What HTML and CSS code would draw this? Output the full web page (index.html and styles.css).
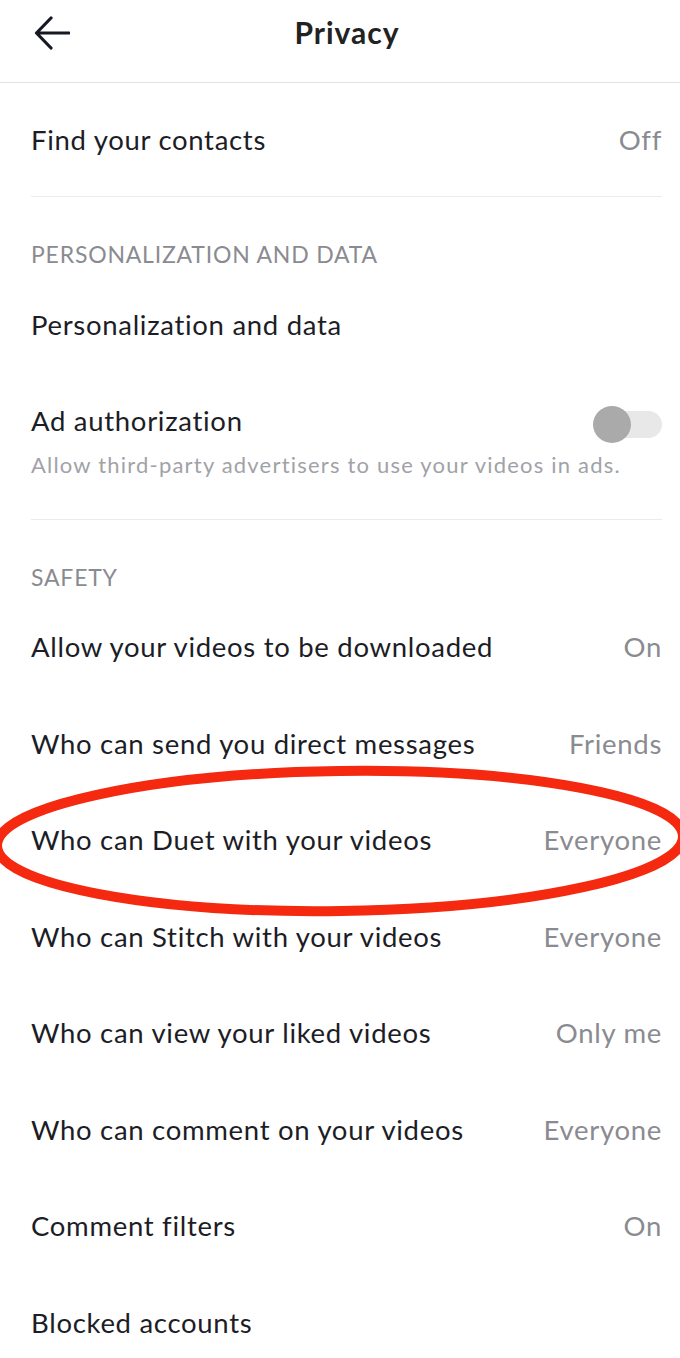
FILE: index.html
```html
<!DOCTYPE html>
<html lang="en">
<head>
    <meta charset="UTF-8">
    <meta name="viewport" content="width=device-width, initial-scale=1.0">
    <title>Privacy</title>
    <link rel="stylesheet" href="styles.css">
</head>
<body>
    <div class="screen">
        <header class="topbar">
            <svg class="back" width="36" height="36" viewBox="0 0 36 36">
                <path d="M35 18H3M17 3L2.5 18L17 33" fill="none" stroke="#161823" stroke-width="3.2" stroke-linecap="round" stroke-linejoin="round"/>
            </svg>
            <h1>Privacy</h1>
        </header>

        <div class="list">
            <div class="group first">
                <div class="row">
                    <span class="label">Find your contacts</span>
                    <span class="value">Off</span>
                </div>
            </div>

            <div class="group">
                <div class="section">PERSONALIZATION AND DATA</div>
                <div class="row">
                    <span class="label">Personalization and data</span>
                </div>
                <div class="row tall">
                    <div class="line">
                        <span class="label">Ad authorization</span>
                        <span class="toggle"><span class="knob"></span></span>
                    </div>
                    <div class="sub">Allow third-party advertisers to use your videos in ads.</div>
                </div>
            </div>

            <div class="group last">
                <div class="section">SAFETY</div>
                <div class="row">
                    <span class="label">Allow your videos to be downloaded</span>
                    <span class="value">On</span>
                </div>
                <div class="row">
                    <span class="label">Who can send you direct messages</span>
                    <span class="value">Friends</span>
                </div>
                <div class="row">
                    <span class="label">Who can Duet with your videos</span>
                    <span class="value">Everyone</span>
                </div>
                <div class="row">
                    <span class="label">Who can Stitch with your videos</span>
                    <span class="value">Everyone</span>
                </div>
                <div class="row">
                    <span class="label">Who can view your liked videos</span>
                    <span class="value">Only me</span>
                </div>
                <div class="row">
                    <span class="label">Who can comment on your videos</span>
                    <span class="value">Everyone</span>
                </div>
                <div class="row">
                    <span class="label">Comment filters</span>
                    <span class="value">On</span>
                </div>
                <div class="row">
                    <span class="label">Blocked accounts</span>
                </div>
            </div>
        </div>

        <!-- red circle drawn over the Duet row -->
        <svg class="mark" width="700" height="160" viewBox="0 0 700 160">
            <ellipse cx="350" cy="80" rx="343" ry="70" fill="none" stroke="#f4290f" stroke-width="10" transform="rotate(-0.8 350 80)"/>
        </svg>
    </div>
</body>
</html>
```

FILE: styles.css
```css
/* General Reset */
* {
    margin: 0;
    padding: 0;
    box-sizing: border-box;
}
body {
    font-family: Lato, 'Open Sans', sans-serif;
    background-color: #fff;
    color: #161823;
}
.screen {
    position: relative;
    width: 680px;
    height: 1358px;
    overflow: hidden;
}
.topbar {
    height: 83px;
    border-bottom: 1px solid #e3e3e4;
    display: flex;
    align-items: center;
    justify-content: center;
    position: relative;
}
.back {
    position: absolute;
    left: 34px;
    top: 15px;
}
h1 {
    font-size: 30px;
    font-weight: 700;
    letter-spacing: 1px;
    color: #222;
    margin-top: -19px;
    margin-left: 14px;
}
.list {
    padding: 0 18px 0 31px;
}
.group {
    border-bottom: 1px solid #ebebeb;
}
.group.first .row {
    height: 113px;
}
.group.last {
    border-bottom: none;
}
.section {
    padding-top: 40px;
    padding-bottom: 5px;
    line-height: 34px;
    font-size: 23px;
    color: #8a8b91;
    letter-spacing: 0.8px;
}
.row {
    height: 96.5px;
    display: flex;
    align-items: center;
    justify-content: space-between;
    font-size: 27.5px;
    letter-spacing: 0.7px;
}
.row.tall {
    height: auto;
    display: block;
    padding-top: 31px;
    padding-bottom: 40px;
}
.line {
    display: flex;
    align-items: center;
    justify-content: space-between;
    height: 34px;
}
.label {
    color: #1c1d26;
}
.value {
    color: #8a8b91;
}
.sub {
    margin-top: 13px;
    line-height: 28px;
    font-size: 22px;
    letter-spacing: 1.2px;
    color: #a1a2a7;
}
.toggle {
    position: relative;
    width: 62px;
    height: 27px;
    border-radius: 14px;
    background-color: #e8e8e8;
    margin-top: 7px;
}
.knob {
    position: absolute;
    left: -7px;
    top: -5px;
    width: 38px;
    height: 37px;
    border-radius: 50%;
    background-color: #aaaaab;
}
.mark {
    position: absolute;
    left: -10px;
    top: 761px;
}
```
